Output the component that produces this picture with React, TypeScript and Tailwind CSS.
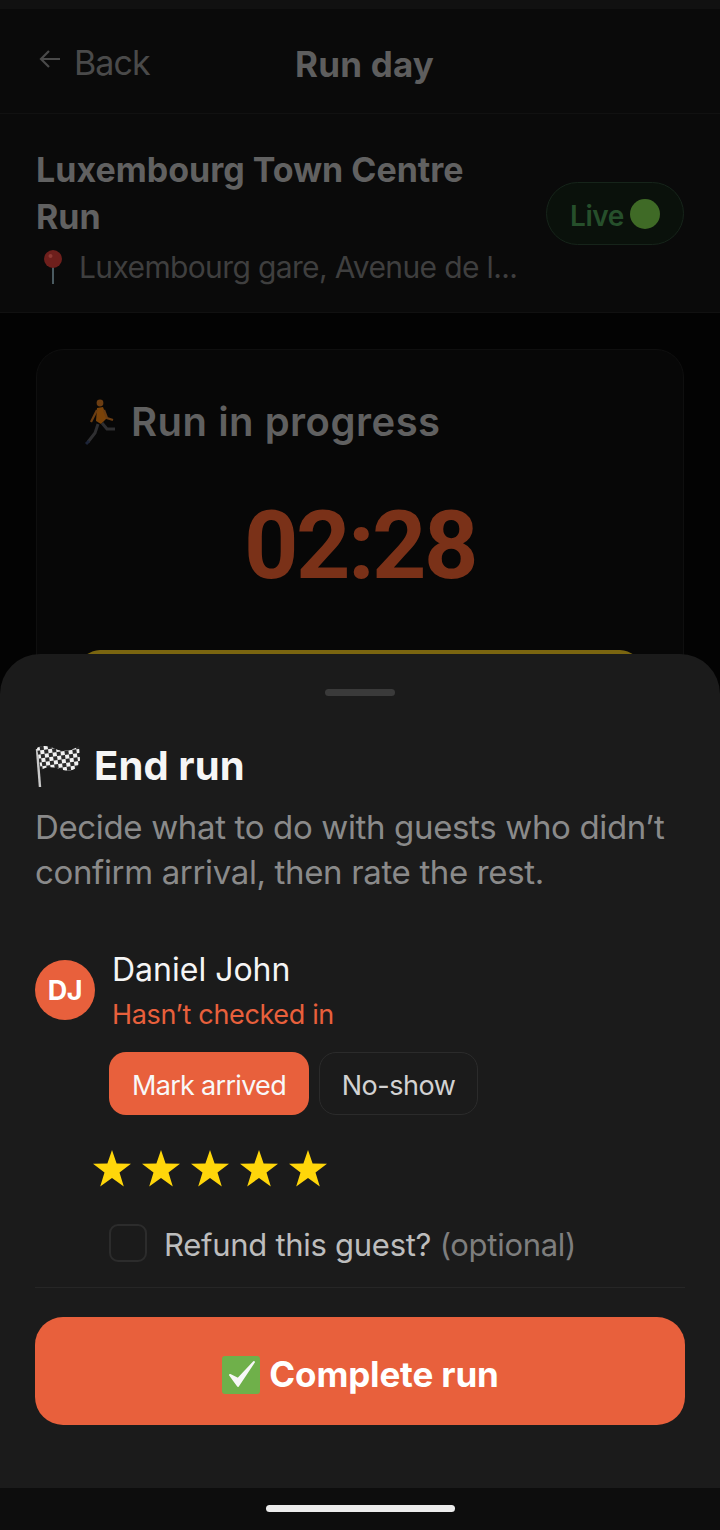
const font = { fontFamily: "Inter, 'Noto Sans', sans-serif" };

const Pin = () => (
  <svg width="26" height="36" viewBox="0 0 26 36" className="shrink-0 ml-[4px]">
    <rect x="12" y="14" width="2" height="21" fill="#4a5a60" />
    <circle cx="13" cy="10" r="9" fill="#6e1f1c" />
    <circle cx="10.5" cy="7" r="2" fill="#8e3a34" />
  </svg>
);

const Runner = () => (
  <svg width="40" height="48" viewBox="0 0 40 48" className="shrink-0">
    <circle cx="20" cy="5" r="3.4" fill="#6b3d12" />
    <path d="M17 10 L23 9 L27 20 L21 26 L16 23 Z" fill="#7a4208" />
    <path d="M17 12 L13 20 L11 24" stroke="#6b3d12" strokeWidth="2.2" fill="none" />
    <path d="M24 12 L27 20 L33 22" stroke="#6b3d12" strokeWidth="2.2" fill="none" />
    <path d="M18 26 L15 35 L8 44" stroke="#2f2f31" strokeWidth="3" fill="none" />
    <path d="M22 25 L27 31 L35 31" stroke="#2f2f31" strokeWidth="3" fill="none" />
    <path d="M6 46 L9 43" stroke="#1c2438" strokeWidth="3" />
  </svg>
);

const Flag = () => (
  <svg width="46" height="46" viewBox="0 0 46 46" className="shrink-0">
    <defs>
      <pattern id="chk" width="8" height="8" patternUnits="userSpaceOnUse" patternTransform="rotate(-8)">
        <rect width="8" height="8" fill="#f1f1f1" />
        <rect width="4" height="4" fill="#2b2b2b" />
        <rect x="4" y="4" width="4" height="4" fill="#2b2b2b" />
      </pattern>
    </defs>
    <path d="M2 6 L5 44" stroke="#c9c9c9" strokeWidth="2.4" />
    <path d="M2 5 C9 1 16 4 23 7 C30 9 38 7 44 3 L45 17 C43 27 36 29 28 27 C20 24 13 23 6 27 Z" fill="url(#chk)" />
  </svg>
);

const Check = () => (
  <svg width="40" height="38" viewBox="0 0 40 38" className="shrink-0">
    <rect x="1" y="0" width="38" height="38" rx="3" fill="#6fb04a" />
    <path d="M9 19 L17 30 L33 6 L17 23 Z" fill="#f7f7f7" stroke="#f7f7f7" strokeWidth="2" strokeLinejoin="round" />
  </svg>
);

const Star = () => (
  <svg width="38" height="37" viewBox="0 0 38 37">
    <path d="M19 0 L23.6 13.6 L38 13.8 L26.5 22.4 L30.8 36.5 L19 28 L7.2 36.5 L11.5 22.4 L0 13.8 L14.4 13.6 Z" fill="#ffd60a" />
  </svg>
);

export default function App() {
  return (
    <div style={font} className="relative w-[720px] h-[1530px] overflow-hidden bg-[#030303]">
      <div className="h-[9px] bg-[#111111]" />

      <header className="relative h-[105px] bg-[#0a0a0a] border-b border-[#111111] flex items-center px-[39px]">
        <div className="flex items-center gap-[13px] text-[#4a4a4a] text-[34px] leading-none tracking-[-0.9px] mt-[3px]">
          <svg width="22" height="24" viewBox="0 0 22 24" fill="none" stroke="#4a4a4a" strokeWidth="2.2" className="-mt-2">
            <path d="M21 12H2M10 4l-8 8 8 8" />
          </svg>
          <span>Back</span>
        </div>
        <div className="absolute left-[295px] top-[33px] text-[#5e5e5e] text-[35px] leading-[44px] font-bold tracking-[0.2px]">Run day</div>
      </header>

      <section className="h-[199px] bg-[#0a0a0a] border-b border-[#111111] flex justify-between pl-9 pr-9 pt-[32px]">
        <div className="w-[490px]">
          <div className="text-[#616161] text-[34px] leading-[47px] font-bold">Luxembourg Town Centre<br />Run</div>
          <div className="flex items-center gap-[13px] mt-[7px] text-[#3f3f3f] text-[30px] leading-[40px] tracking-[-0.63px] whitespace-nowrap">
            <Pin />
            <span>Luxembourg gare, Avenue de l...</span>
          </div>
        </div>
        <div className="w-[138px] h-[63px] rounded-full border border-[#16241a] bg-[#0a110b] flex items-center justify-center gap-[6px] mt-[36px]">
          <span className="text-[#264f2b] text-[28px] font-semibold tracking-[-0.4px] mt-[4px]">Live</span>
          <span className="w-[30px] h-[30px] rounded-full bg-[#3f6a26] mt-[1px]" />
        </div>
      </section>

      <main className="px-9 pt-[36px]">
        <div className="h-[500px] rounded-[28px] border border-[#0f0f0f] bg-[#070707] px-[43px] pt-[46px]">
          <div className="flex items-center gap-[11px] text-[#606060] text-[40px] leading-[52px] font-semibold tracking-[0.5px]">
            <Runner />
            <span>Run in progress</span>
          </div>
          <div style={{ fontFamily: "Roboto, sans-serif" }} className="text-center text-[#7a3118] text-[95px] leading-[100px] font-bold tracking-[-2.6px] mt-[48px]">02:28</div>
          <div className="h-[60px] rounded-[20px] bg-[#7a6510] mt-[54px]" />
        </div>
      </main>

      <div className="absolute left-0 right-0 top-[654px] h-[834px] rounded-t-[40px] bg-[#1b1b1b] px-[35px]">
        <div className="w-[70px] h-[7px] rounded-full bg-[#3a3a3a] mx-auto mt-[35px]" />

        <div className="flex items-center gap-[13px] mt-[44px] text-[#f5f5f5] text-[40px] leading-[52px] font-bold tracking-[0.1px]">
          <Flag />
          <span>End run</span>
        </div>
        <p className="mt-[13px] text-[#8a8a8a] text-[33px] leading-[45px] tracking-[-0.35px]">
          Decide what to do with guests who didn’t<br />confirm arrival, then rate the rest.
        </p>

        <div className="flex items-center gap-[18px] mt-[51px]">
          <div className="w-[60px] h-[60px] mb-[2px] pt-[2px] rounded-full bg-[#e8603c] flex items-center justify-center text-white text-[27px] font-bold tracking-[-0.5px]">DJ</div>
          <div className="-ml-[1px]">
            <div className="text-[#f5f5f5] text-[32px] leading-[48px]">Daniel John</div>
            <div className="text-[#e8603c] text-[27px] leading-[42px] tracking-[-0.35px]">Hasn’t checked in</div>
          </div>
        </div>

        <div className="flex gap-[10px] ml-[74px] mt-[16px]">
          <button className="w-[200px] h-[63px] pt-[5px] rounded-[17px] bg-[#e8603c] text-[#f8f8f8] text-[27px] tracking-[-0.7px]">Mark arrived</button>
          <button className="w-[159px] h-[63px] pt-[5px] rounded-[17px] border border-[#2b2b2b] text-[#d2d2d2] text-[27px] tracking-[-0.5px]">No-show</button>
        </div>

        <div className="flex gap-[11px] ml-[58px] mt-[35px]">
          <Star /><Star /><Star /><Star /><Star />
        </div>

        <div className="flex items-center gap-[17px] ml-[74px] mt-[36px] h-[40px]">
          <span className="w-[38px] h-[38px] rounded-[9px] border-[2px] border-[#2c2c2c]" />
          <span className="text-[#bdbdbd] text-[31px] tracking-[-0.28px] whitespace-nowrap pt-[4px]">
            Refund this guest? <span className="text-[#7e7e7e]">(optional)</span>
          </span>
        </div>

        <div className="h-px bg-[#262626] mt-[24px]" />

        <button className="w-full h-[108px] pt-[7px] rounded-[28px] bg-[#e8603c] mt-[29px] flex items-center justify-center gap-[8px] text-white text-[35px] font-bold tracking-[-0.15px]">
          <Check />
          <span>Complete run</span>
        </button>
      </div>

      <div className="absolute left-0 right-0 bottom-0 h-[42px] bg-[#0d0d0d] flex justify-center">
        <div className="w-[189px] h-[7px] rounded-full bg-[#ececec] mt-[17px]" />
      </div>
    </div>
  );
}
